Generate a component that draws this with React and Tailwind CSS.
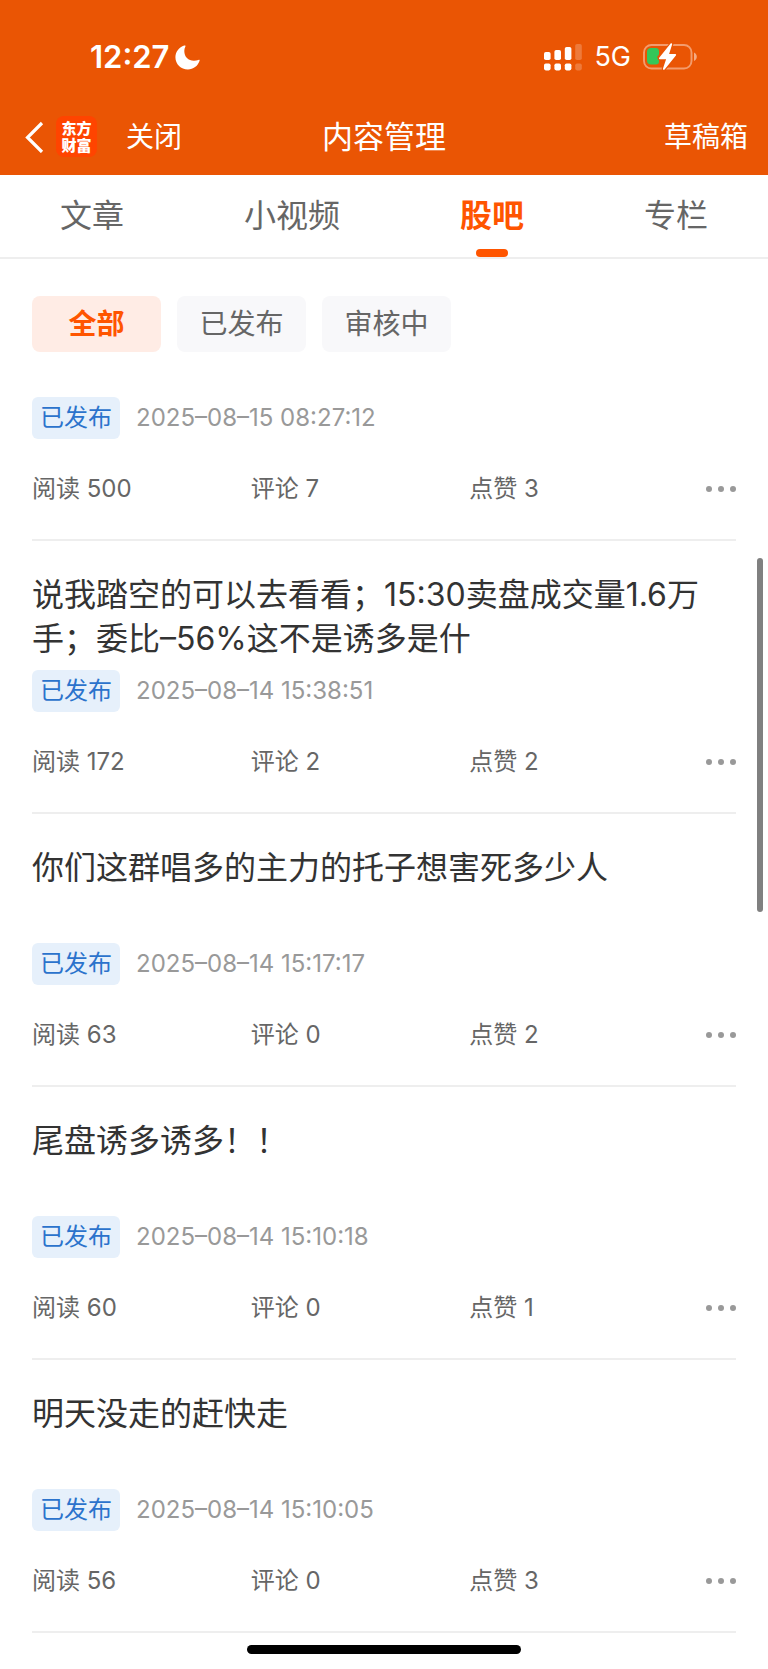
import { useState } from "react";

const TABS = ["文章", "小视频", "股吧", "专栏"];
const FILTERS = ["全部", "已发布", "审核中"];

const POSTS = [
  { title: "", date: "2025–08–15 08:27:12", reads: 500, comments: 7, likes: 3 },
  { title: "说我踏空的可以去看看；15:30卖盘成交量1.6万手；委比–56%这不是诱多是什", date: "2025–08–14 15:38:51", reads: 172, comments: 2, likes: 2 },
  { title: "你们这群唱多的主力的托子想害死多少人", date: "2025–08–14 15:17:17", reads: 63, comments: 0, likes: 2 },
  { title: "尾盘诱多诱多！！", date: "2025–08–14 15:10:18", reads: 60, comments: 0, likes: 1 },
  { title: "明天没走的赶快走", date: "2025–08–14 15:10:05", reads: 56, comments: 0, likes: 3 },
];

function MoonIcon() {
  return (
    <svg width="25" height="25" viewBox="0 0 25 25" fill="currentColor" aria-hidden="true">
      <path d="M9.2.6C10.2.2 10.700.6 10.400 1.500 9.600 3 9.300 4.400 9.300 6c0 5.800 4 9.800 9.700 9.800 1.600 0 3-.2 4.400-.8 1-.4 1.500.1 1.100 1.100C22.700 21.200 18.300 24.500 12.900 24.500 6 24.500.4 19.200.4 12.300.4 6.900 4.200 2.400 9.200.6z" />
    </svg>
  );
}

function SignalIcon() {
  return (
    <svg width="38" height="27" viewBox="0 0 38 27" fill="currentColor" aria-hidden="true">
      <rect x="0" y="8" width="6.600" height="8" rx="1.800" />
      <rect x="10.400" y="6" width="6.600" height="10" rx="1.800" />
      <rect x="20.800" y="3" width="6.600" height="13" rx="1.800" />
      <rect x="31.200" y="0" width="6.600" height="16" rx="1.800" opacity=".22" />
      <rect x="0" y="19.400" width="6.600" height="7" rx="1.800" />
      <rect x="10.400" y="19.400" width="6.600" height="7" rx="1.800" />
      <rect x="20.800" y="19.400" width="6.600" height="7" rx="1.800" />
      <rect x="31.200" y="19.400" width="6.600" height="7" rx="1.800" opacity=".22" />
    </svg>
  );
}

function BatteryIcon() {
  return (
    <svg width="55" height="28" viewBox="0 0 55 28" fill="none" aria-hidden="true">
      <rect x="1" y="2" width="47.500" height="23.500" rx="7.500" stroke="#fff" strokeOpacity=".42" strokeWidth="1.900" />
      <path d="M51 9.500v8.600c1.800-.8 2.800-2.400 2.800-4.300S52.800 10.300 51 9.500z" fill="#fff" fillOpacity=".5" />
      <path d="M8 5h5c2 0 3 1.500 3 3v3.500l-2 2.500 2 3v1.500c0 2-1 3-3 3H8c-2.500 0-4-1.500-4-4V9c0-2.500 1.500-4 4-4z" fill="#34c759" />
      <path d="M27.600.6 16.200 14.800c-.5.600-.2 1.400.6 1.400h6.300L20 25.600c-.3 1.200.8 1.700 1.600.8l11.300-14c.5-.6.200-1.400-.6-1.400h-6.200l3-9.500C29.400.3 28.400-.3 27.600.6z" fill="#fff" stroke="#ea5504" strokeWidth="2.400" paintOrder="stroke" />
    </svg>
  );
}

function StatusBar() {
  return (
    <div className="flex h-[94px] items-center justify-between pt-5 pr-[70px] pl-[90px]">
      <div className="flex items-center gap-1.5">
        <span className="text-[31px] leading-8 font-semibold">12:27</span>
        <MoonIcon />
      </div>
      <div className="flex items-center">
        <SignalIcon />
        <span className="ml-3 text-[27px] leading-8">5G</span>
        <span className="ml-3">
          <BatteryIcon />
        </span>
      </div>
    </div>
  );
}

function NavBar() {
  return (
    <div className="grid h-[81px] grid-cols-3 items-center px-5 pt-1">
      <div className="flex items-center">
        <button type="button" aria-label="返回" className="ml-1">
          <svg width="20" height="32" viewBox="0 0 20 32" fill="none" stroke="currentColor" strokeWidth="3.200" aria-hidden="true">
            <path d="M18 2 3.500 16.500 18 31" />
          </svg>
        </button>
        <span className="ml-3 flex h-[41px] w-[41px] items-center justify-center rounded-lg bg-[#ff4400] text-center text-[15px] leading-[17px] font-black">
          东方
          <br />
          财富
        </span>
        <button type="button" className="ml-[29px] text-[28px] leading-10">关闭</button>
      </div>
      <h1 className="text-center text-[31px] leading-10">内容管理</h1>
      <button type="button" className="justify-self-end text-[28px] leading-10">草稿箱</button>
    </div>
  );
}

function Stat({ label, value }) {
  return (
    <span>
      {label} {value}
    </span>
  );
}

function Post({ post }) {
  return (
    <li className="border-b-2 border-[#eeeeee]">
      {post.title && (
        <h2 className="mb-[9px] min-h-[120px] pt-8 text-[32px] leading-[44px] text-[#333333]">{post.title}</h2>
      )}
      <div className="flex items-center gap-4">
        <span className="rounded-md bg-[#e6f0fb] px-2 text-[24px] leading-[42px] text-[#2b73cc]">已发布</span>
        <time className="text-[24px] leading-[42px] text-[#999999]">{post.date}</time>
      </div>
      <div className="mt-8 mb-8 grid grid-cols-[1fr_1fr_1fr_48px] items-center text-[24px] leading-9 text-[#666666]">
        <Stat label="阅读" value={post.reads} />
        <Stat label="评论" value={post.comments} />
        <Stat label="点赞" value={post.likes} />
        <button type="button" aria-label="更多" className="flex justify-end gap-1.5">
          <span className="size-1.5 rounded-full bg-[#999999]" />
          <span className="size-1.5 rounded-full bg-[#999999]" />
          <span className="size-1.5 rounded-full bg-[#999999]" />
        </button>
      </div>
    </li>
  );
}

export default function App() {
  const [tab, setTab] = useState("股吧");
  const [filter, setFilter] = useState("全部");

  return (
    <div className="relative min-h-screen bg-white font-['Inter','Noto_Sans_CJK_SC',sans-serif]">
      <header className="bg-[#ea5504] text-white">
        <StatusBar />
        <NavBar />
      </header>

      <nav className="flex h-[84px] justify-around border-b-2 border-[#eeeeee]">
        {TABS.map((t) => (
          <button
            key={t}
            type="button"
            onClick={() => setTab(t)}
            className={`relative text-[32px] ${t === tab ? "font-bold text-[#ff5500]" : "text-[#666666]"}`}
          >
            {t}
            {t === tab && <span className="absolute bottom-0 left-1/2 h-2 w-8 -translate-x-1/2 rounded-full bg-[#ff5500]" />}
          </button>
        ))}
      </nav>

      <main className="px-8 pt-[37px]">
        <div className="flex gap-4">
          {FILTERS.map((f) => (
            <button
              key={f}
              type="button"
              onClick={() => setFilter(f)}
              className={`h-14 w-[129px] rounded-lg text-[28px] ${f === filter ? "bg-[#ffece5] font-bold text-[#ff5500]" : "bg-[#f8f8fa] text-[#666666]"}`}
            >
              {f}
            </button>
          ))}
        </div>

        <ul className="mt-[45px]">
          {POSTS.map((post) => (
            <Post key={post.date} post={post} />
          ))}
        </ul>
      </main>

      {/* scroll thumb and home indicator float over the list */}
      <div className="absolute top-[558px] right-[5px] h-[354px] w-1.5 rounded-full bg-[#808080]" />
      <div className="fixed bottom-[15px] left-1/2 h-[9px] w-[274px] -translate-x-1/2 rounded-full bg-black" />
    </div>
  );
}
